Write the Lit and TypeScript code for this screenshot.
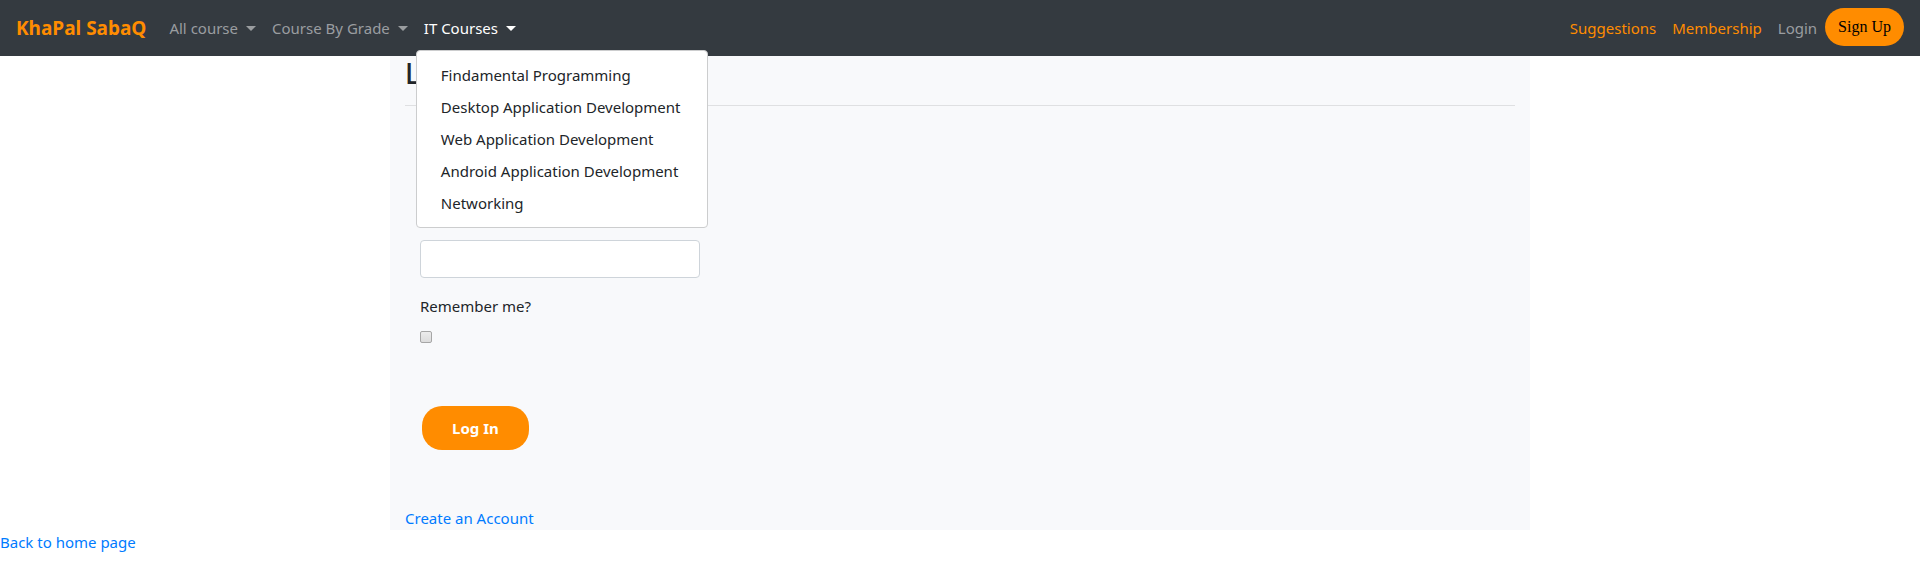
import { LitElement, html, css } from "lit";
import { customElement, property, state } from "lit/decorators.js";

const COURSES = [
  "Findamental Programming",
  "Desktop Application Development",
  "Web Application Development",
  "Android Application Development",
  "Networking",
];

@customElement("site-nav")
export class SiteNav extends LitElement {
  @property({ type: Boolean }) open = true;

  static styles = css`
    :host {
      display: block;
      background: #343a40;
    }
    .bar {
      display: flex;
      align-items: center;
      justify-content: space-between;
      box-sizing: border-box;
      min-height: 56px;
      padding: 0 16px;
    }
    .group {
      display: flex;
      align-items: center;
      margin: 0;
      padding: 0;
      list-style: none;
    }
    .brand {
      margin-right: 15px;
      color: #ff8c00;
      font-size: 19px;
      font-weight: 700;
      line-height: 30px;
      text-decoration: none;
    }
    .item {
      position: relative;
    }
    .link {
      display: flex;
      align-items: center;
      padding: 8px;
      border: 0;
      background: none;
      color: #9a9da0;
      font: inherit;
      text-decoration: none;
      cursor: pointer;
    }
    .link.active {
      color: #fff;
    }
    .link.accent {
      color: #ff8c00;
    }
    .caret {
      margin-left: 8px;
      border: 5px solid transparent;
      border-top-color: currentColor;
      border-bottom: 0;
    }
    .signup {
      height: 38px;
      margin-bottom: 2px;
      padding: 0 13px;
      border: 0;
      border-radius: 19px;
      background: #ff8c00;
      color: #000;
      font: 16px "Liberation Serif", serif;
      cursor: pointer;
    }
    .menu {
      position: absolute;
      z-index: 10;
      top: 42px;
      left: 0;
      box-sizing: border-box;
      min-width: 292px;
      margin: 0;
      padding: 8px 0;
      border: 1px solid #cccdce;
      border-radius: 4px;
      background: #fff;
      list-style: none;
    }
    .choice {
      display: block;
      padding: 4px 24px;
      color: #212529;
      text-decoration: none;
      white-space: nowrap;
    }
  `;

  render() {
    return html`
      <nav class="bar">
        <div class="group">
          <a class="brand" href="#">KhaPal SabaQ</a>
          <ul class="group">
            <li class="item">
              <button class="link" type="button">All course<span class="caret"></span></button>
            </li>
            <li class="item">
              <button class="link" type="button">Course By Grade<span class="caret"></span></button>
            </li>
            <li class="item">
              <button
                class="link active"
                type="button"
                aria-expanded=${this.open}
                @click=${() => (this.open = !this.open)}
              >IT Courses<span class="caret"></span></button>
              ${this.open
                ? html`<ul class="menu">
                    ${COURSES.map((c) => html`<li><a class="choice" href="#">${c}</a></li>`)}
                  </ul>`
                : null}
            </li>
          </ul>
        </div>
        <div class="group">
          <a class="link accent" href="#">Suggestions</a>
          <a class="link accent" href="#">Membership</a>
          <a class="link" href="#">Login</a>
          <button class="signup" type="button">Sign Up</button>
        </div>
      </nav>
    `;
  }
}

@customElement("login-panel")
export class LoginPanel extends LitElement {
  @state() private remember = false;

  static styles = css`
    :host {
      display: block;
      box-sizing: border-box;
      width: 100%;
      max-width: 1140px;
      margin: 0 auto;
      padding: 0 15px;
      background: #f8f9fb;
    }
    .title {
      margin: 0;
      padding-bottom: 15px;
      border-bottom: 1px solid #dfe0e2;
      font-size: 28px;
      font-weight: 500;
      line-height: 34px;
    }
    .form {
      display: flex;
      flex-direction: column;
      align-items: flex-start;
      gap: 16px;
      padding: 16px 15px 56px;
    }
    .field {
      display: flex;
      flex-direction: column;
      align-items: flex-start;
      gap: 8px;
    }
    .text {
      box-sizing: border-box;
      width: 280px;
      height: 38px;
      padding: 6px 12px;
      border: 1px solid #ced4da;
      border-radius: 4px;
      background: #fff;
      font: inherit;
    }
    .check {
      appearance: none;
      box-sizing: border-box;
      width: 12px;
      height: 12px;
      margin: 5px 0;
      border: 1px solid #a6a6a6;
      border-radius: 2px;
      background: linear-gradient(#ececec, #dcdcdc);
    }
    .check:checked {
      background: #ff8c00;
    }
    .submit {
      height: 44px;
      margin: 42px 2px 0;
      padding: 0 30px;
      border: 0;
      border-radius: 20px;
      background: #ff8c00;
      color: #fff;
      font: inherit;
      font-weight: 700;
      cursor: pointer;
    }
    .create {
      display: block;
      width: fit-content;
      color: #007bff;
      text-decoration: none;
    }
  `;

  render() {
    return html`
      <h2 class="title">Log In</h2>
      <form class="form" @submit=${(e: Event) => e.preventDefault()}>
        <div class="field">
          <label for="email">Email</label>
          <input class="text" id="email" type="email" />
        </div>
        <div class="field">
          <label for="password">Password</label>
          <input class="text" id="password" type="password" />
        </div>
        <div class="field">
          <label for="remember">Remember me?</label>
          <input
            class="check"
            id="remember"
            type="checkbox"
            .checked=${this.remember}
            @change=${() => (this.remember = !this.remember)}
          />
        </div>
        <button class="submit" type="submit">Log In</button>
      </form>
      <a class="create" href="#">Create an Account</a>
    `;
  }
}

@customElement("app-root")
export class AppRoot extends LitElement {
  static styles = css`
    :host {
      display: block;
      color: #212529;
      font: 15px/24px "Noto Sans", "Open Sans", sans-serif;
    }
    .home {
      display: block;
      width: fit-content;
      color: #007bff;
      text-decoration: none;
    }
  `;

  render() {
    return html`
      <site-nav></site-nav>
      <main><login-panel></login-panel></main>
      <a class="home" href="#">Back to home page</a>
    `;
  }
}
